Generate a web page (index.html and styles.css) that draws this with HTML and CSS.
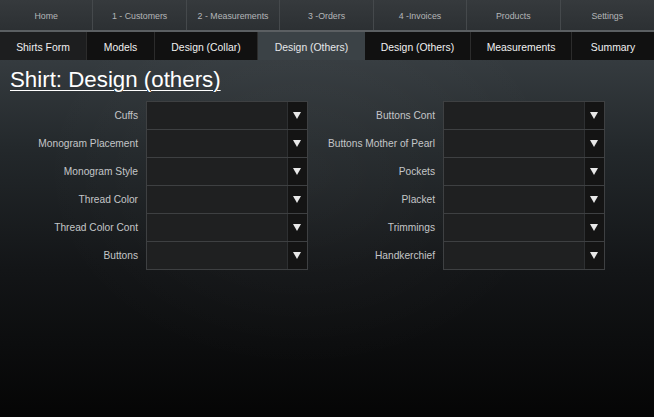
FILE: index.html
```html
<!DOCTYPE html>
<html lang="en">
<head>
  <meta charset="UTF-8">
  <meta name="viewport" content="width=device-width, initial-scale=1.0">
  <title>Shirt: Design (others)</title>
  <link rel="stylesheet" href="styles.css">
</head>
<body>
  <div class="topnav">
    <a>Home</a>
    <a>1 - Customers</a>
    <a>2 - Measurements</a>
    <a>3 -Orders</a>
    <a>4 -Invoices</a>
    <a>Products</a>
    <a>Settings</a>
  </div>
  <div class="tabs">
    <a class="first">Shirts Form</a>
    <a>Models</a>
    <a>Design (Collar)</a>
    <a class="active">Design (Others)</a>
    <a>Design (Others)</a>
    <a>Measurements</a>
    <a>Summary</a>
  </div>

  <h1 class="title">Shirt: Design (others)</h1>

  <div class="form">
    <label>Cuffs</label><div class="select"><span class="arrow"></span></div>
    <label>Buttons Cont</label><div class="select"><span class="arrow"></span></div>

    <label>Monogram Placement</label><div class="select"><span class="arrow"></span></div>
    <label>Buttons Mother of Pearl</label><div class="select"><span class="arrow"></span></div>

    <label>Monogram Style</label><div class="select"><span class="arrow"></span></div>
    <label>Pockets</label><div class="select"><span class="arrow"></span></div>

    <label>Thread Color</label><div class="select"><span class="arrow"></span></div>
    <label>Placket</label><div class="select"><span class="arrow"></span></div>

    <label>Thread Color Cont</label><div class="select"><span class="arrow"></span></div>
    <label>Trimmings</label><div class="select"><span class="arrow"></span></div>

    <label>Buttons</label><div class="select"><span class="arrow"></span></div>
    <label>Handkerchief</label><div class="select"><span class="arrow"></span></div>
  </div>
</body>
</html>
```

FILE: styles.css
```css
* { margin: 0; padding: 0; box-sizing: border-box; }
html, body { height: 100%; }
body {
  font-family: "Liberation Sans", Arial, sans-serif;
  color: #fff;
  background:
    radial-gradient(ellipse 260px 200px at 300px 170px, rgba(255,255,255,0.04), rgba(255,255,255,0) 100%),
    linear-gradient(#353b3f 60px, #23282b 150px, #131517 270px, #050505 417px);
  overflow: hidden;
}

/* main menu */
.topnav { display: grid; grid-template-columns: repeat(7, 1fr); height: 32px; background: linear-gradient(#363a3d, #2c3033); border-bottom: 2px solid #5b5f62; }
.topnav a { display: flex; justify-content: center; align-items: center; padding-top: 1px; font-size: 8.8px; color: #b4b6b8; border-right: 1px solid #45494c; }
.topnav a:last-child { border-right: none; }

/* sub menu */
.tabs { display: grid; grid-template-columns: 87px 68px 103px 107px 106px 101px 1fr; height: 28px; background: #111; }
.tabs a { display: flex; justify-content: center; align-items: center; padding-top: 3px; font-size: 10.4px; color: #f0f0f0; border-right: 1px solid #2c2c2c; }
.tabs a:last-child { border-right: none; }
.tabs .first { background: #1d1e1f; }
.tabs .active { background: #3b4246; color: #e6e8ea; border-right: none; }

.title { font-size: 22.3px; font-weight: normal; text-decoration: underline; text-underline-offset: 3px; text-decoration-thickness: 1px; margin: 6px 0 0 10px; line-height: 28px; color: #fff; }

/* form */
.form { display: grid; grid-template-columns: 146px 162px 135px 162px; grid-auto-rows: 28px; margin-top: 7px; }
.form label { display: flex; justify-content: flex-end; align-items: center; padding-right: 8px; font-size: 10.2px; color: #c4c6c8; }
.form .select { position: relative; height: 29px; background: #1f2021; border: 1px solid #3e4042; }
.form .arrow { position: absolute; right: 0; top: 0; bottom: 0; width: 20px; background: #141414; border-left: 1px solid #2e3032; }
.form .arrow:after { content: ""; position: absolute; left: 5px; top: 10px; border-left: 4px solid transparent; border-right: 4px solid transparent; border-top: 7px solid #e8e8e8; }
```
